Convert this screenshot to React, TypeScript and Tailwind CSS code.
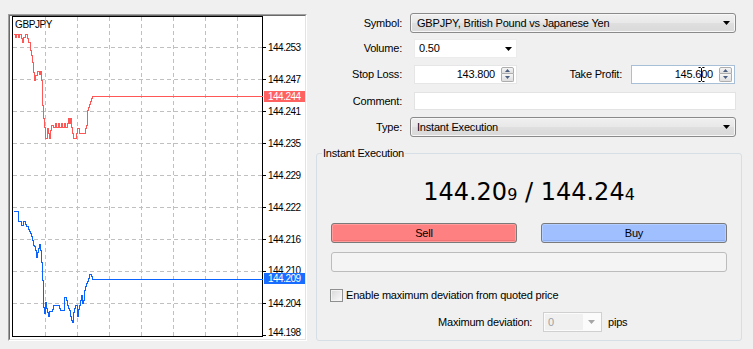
import React from "react";

const redPts: [number, number][] = [
  [13, 34], [15, 34], [15, 37], [16, 37], [16, 34], [18, 34], [18, 37], [19, 37], [19, 34], [21, 34], [21, 38], [22, 38], [22, 42], [23, 42], [23, 37], [25, 37], [25, 34], [27, 34], [27, 38], [28, 38], [28, 42], [30, 42], [30, 50], [31, 50], [31, 55], [32, 55], [32, 62], [33, 62], [33, 72], [34, 72], [34, 80], [35, 80], [35, 75], [37, 75], [37, 71], [39, 71], [39, 74], [40, 74], [40, 71], [41, 71], [41, 80], [42, 80], [42, 105], [43, 105], [43, 118], [44, 118], [44, 127], [45, 127], [45, 138], [47, 138], [47, 128], [48, 128], [48, 133], [49, 133], [49, 138], [50, 138], [50, 130], [51, 130], [51, 125], [53, 125], [53, 127], [55, 127], [55, 123], [56, 123], [56, 127], [58, 127], [58, 123], [59, 123], [59, 127], [61, 127], [61, 123], [62, 123], [62, 127], [64, 127], [64, 123], [65, 123], [65, 127], [67, 127], [67, 123], [68, 123], [68, 118], [69, 118], [69, 123], [70, 123], [70, 118], [71, 118], [71, 127], [72, 127], [72, 133], [73, 133], [73, 138], [76, 138], [76, 133], [77, 133], [77, 128], [79, 128], [79, 133], [85, 133], [85, 128], [86, 128], [86, 125], [87, 125], [87, 110], [88, 110], [88, 107], [89, 107], [89, 104], [90, 104], [90, 101], [91, 101], [91, 98], [92, 98], [92, 96], [262, 96],
];

const bluePts: [number, number][] = [
  [13, 211], [18, 211], [18, 221], [21, 221], [21, 225], [23, 225], [23, 221], [25, 221], [25, 224], [26, 224], [26, 226], [28, 226], [28, 229], [29, 229], [29, 231], [30, 231], [30, 233], [31, 233], [31, 236], [32, 236], [32, 240], [33, 240], [33, 245], [34, 245], [34, 246], [35, 246], [35, 250], [36, 250], [36, 257], [37, 257], [37, 252], [38, 252], [38, 248], [39, 248], [39, 244], [40, 244], [40, 250], [41, 250], [41, 262], [42, 262], [42, 280], [43, 280], [43, 307], [44, 307], [44, 313], [45, 313], [45, 302], [46, 302], [46, 308], [47, 308], [47, 312], [48, 312], [48, 316], [49, 316], [49, 311], [52, 311], [52, 309], [53, 309], [53, 305], [59, 305], [59, 308], [60, 308], [60, 310], [64, 310], [64, 297], [66, 297], [66, 300], [67, 300], [67, 305], [68, 305], [68, 308], [69, 308], [69, 310], [70, 310], [70, 316], [71, 316], [71, 320], [72, 320], [72, 322], [73, 322], [73, 312], [74, 312], [74, 308], [75, 308], [75, 305], [77, 305], [77, 316], [78, 316], [78, 309], [79, 309], [79, 305], [80, 305], [80, 300], [81, 300], [81, 295], [82, 295], [82, 303], [83, 303], [83, 300], [84, 300], [84, 290], [85, 290], [85, 286], [86, 286], [86, 283], [87, 283], [87, 281], [88, 281], [88, 278], [89, 278], [89, 274], [91, 274], [91, 276], [92, 276], [92, 279], [262, 279],
];

const toPoints = (p: [number, number][]) => p.map(([x, y]) => `${x + 0.5},${y + 0.5}`).join(" ");

const gridX = [45, 77, 109, 141, 173, 205, 237];
const gridY = [47, 79, 111, 143, 175, 207, 239, 271, 303];
const labels: [number, string][] = [
  [47, "144.253"], [79, "144.247"], [111, "144.241"], [143, "144.235"], [175, "144.229"], [207, "144.222"], [239, "144.216"], [270, "144.210"], [303, "144.204"], [332, "144.198"],
];

const fam = "'Liberation Sans', Arial, sans-serif";

function Chart() {
  return (
    <div className="ml-[8px] mt-[14px] w-[299px] h-[327px] border border-t-[#a0a0a0] border-l-[#a0a0a0] border-r-[#ffffff] border-b-[#ffffff]">
      <div className="w-full h-full border border-t-[#696969] border-l-[#696969] border-r-[#e3e3e3] border-b-[#e3e3e3] bg-white">
        <svg width="295" height="323" viewBox="10 16 295 323" shapeRendering="crispEdges" style={{ display: "block" }}>
          {gridX.map((x) => (
            <line key={"gx" + x} x1={x + 0.5} y1={17} x2={x + 0.5} y2={336} stroke="#c0c0c0" strokeDasharray="4 3" />
          ))}
          {gridY.map((y) => (
            <line key={"gy" + y} x1={13} y1={y + 0.5} x2={262} y2={y + 0.5} stroke="#c0c0c0" strokeDasharray="4 3" />
          ))}
          <rect x={12.5} y={16.5} width={250} height={320} fill="none" stroke="#000" />
          {gridY.map((y) => (
            <line key={"tk" + y} x1={263} y1={y + 0.5} x2={266} y2={y + 0.5} stroke="#000" />
          ))}
          <line x1={263} y1={335.5} x2={266} y2={335.5} stroke="#000" />
          <text x={15} y={27.5} fontSize={10} fill="#000" letterSpacing={-0.4} fontFamily={fam}>GBPJPY</text>
          <polyline points={toPoints(redPts)} fill="none" stroke="#ff5656" />
          <polyline points={toPoints(bluePts)} fill="none" stroke="#0a62ff" />
          {labels.map(([y, t]) => (
            <text key={t} x={268} y={y + 3.6} fontSize={10} fill="#000" letterSpacing={-0.5} fontFamily={fam}>{t}</text>
          ))}
          <rect x={264} y={91} width={41} height={11} fill="#ff6161" />
          <text x={268} y={100} fontSize={10} fill="#fff" letterSpacing={-0.5} fontFamily={fam}>144.244</text>
          <rect x={264} y={273} width={41} height={11} fill="#186cff" />
          <text x={268} y={282} fontSize={10} fill="#fff" letterSpacing={-0.5} fontFamily={fam}>144.209</text>
        </svg>
      </div>
    </div>
  );
}

function Arrow({ color = "#000" }: { color?: string }) {
  return (
    <svg width="7" height="4" viewBox="0 0 7 4" className="block">
      <path d="M0 0h7L3.5 4z" fill={color} />
    </svg>
  );
}

function Combo({ text, w }: { text: string; w: string }) {
  return (
    <div className={`${w} ml-[8px] h-[20px] rounded-[3px] border border-[#8a8a8a] bg-[linear-gradient(#f0f0f0,#e8e8e8_50%,#dfdfdf_50%,#d9d9d9)] flex items-center pl-[6px] pr-[5px] shadow-[inset_0_0_0_1px_#f7f7f7]`}>
      <span className="flex-1 whitespace-nowrap">{text}</span>
      <Arrow />
    </div>
  );
}

function Spinner() {
  const btn = "w-[13px] h-[7px] border border-[#adadad] bg-[linear-gradient(#f6f6f6,#dedede)] flex items-center justify-center";
  return (
    <div className="flex flex-col w-[13px]">
      <div className={`${btn} rounded-t-[2px]`}>
        <svg width="5" height="3" viewBox="0 0 5 3" className="block">
          <path d="M0 3L2.5 0L5 3z" fill="#4a5f80" />
        </svg>
      </div>
      <div className={`${btn} rounded-b-[2px] border-t-0 h-[8px]`}>
        <svg width="5" height="3" viewBox="0 0 5 3" className="block">
          <path d="M0 0h5L2.5 3z" fill="#4a5f80" />
        </svg>
      </div>
    </div>
  );
}

function Label({ children, w = "w-[86px]" }: { children: React.ReactNode; w?: string }) {
  return <div className={`${w} text-right whitespace-nowrap`}>{children}</div>;
}

export default function App() {
  return (
    <div className="w-[753px] h-[349px] bg-[#f0f0f0] flex overflow-hidden font-['Liberation_Sans',Arial,sans-serif] text-[11px] tracking-[-0.2px] text-black leading-[13px]">
      <Chart />
      <div className="ml-[9px] w-[426px] flex flex-col">
        <div className="mt-[13px] h-[20px] flex items-center">
          <Label>Symbol:</Label>
          <Combo text="GBPJPY, British Pound vs Japanese Yen" w="w-[326px]" />
        </div>
        <div className="mt-[6px] h-[19px] flex items-center">
          <Label>Volume:</Label>
          <div className="ml-[12px] w-[103px] h-[19px] bg-white border border-[#ececec] flex items-center pl-[4px] pr-[4px]">
            <span className="flex-1">0.50</span>
            <Arrow />
          </div>
        </div>
        <div className="mt-[7px] h-[19px] flex items-center">
          <Label>Stop Loss:</Label>
          <div className="ml-[12px] w-[103px] h-[19px] bg-white border border-[#e6e6e6] flex items-center justify-end pr-[2px]">
            <span className="mr-[6px]">143.800</span>
            <Spinner />
          </div>
          <Label w="w-[105px]">Take Profit:</Label>
          <div className="relative ml-[9px] w-[104px] h-[19px] bg-white border border-[#a7c0d8] flex items-center justify-end pr-[2px]">
            <span className="mr-[6px]">145.600</span>
            <Spinner />
            <svg width="7" height="15" viewBox="0 0 7 15" className="absolute left-[66px] top-[1px]">
              <path d="M0.5 0.5h2l1 1l1 -1h2M3.5 1.5v12M0.5 14.5h2l1 -1l1 1h2" fill="none" stroke="#000" strokeWidth="1" />
            </svg>
          </div>
        </div>
        <div className="mt-[8px] h-[18px] flex items-center">
          <Label>Comment:</Label>
          <div className="ml-[12px] w-[322px] h-[18px] bg-white border border-[#e3e3e3]" />
        </div>
        <div className="mt-[7px] h-[20px] flex items-center">
          <Label>Type:</Label>
          <Combo text="Instant Execution" w="w-[326px]" />
        </div>
        <div className="relative mt-[16px] h-[188px] w-[426px] border border-[#d5dfe5] rounded-[3px]">
          <div className="absolute left-[5px] top-[-8px] px-[1px] bg-[#f0f0f0] leading-[14px] whitespace-nowrap">Instant Execution</div>
          <div className="flex flex-col px-[14px]">
            <div className="pt-[24px] text-center font-['DejaVu_Sans',sans-serif] text-[24px] leading-[28px] tracking-normal">
              144.20<span className="text-[16px]">9</span> / 144.24<span className="text-[16px]">4</span>
            </div>
            <div className="mt-[14px] flex justify-between">
              <div className="w-[186px] h-[20px] rounded-[3px] border border-[#7a7a7a] bg-[#ff8080] shadow-[inset_0_0_0_1px_#ff9c9c,inset_0_-2px_0_0_#f07272] flex items-center justify-center">Sell</div>
              <div className="w-[186px] h-[20px] rounded-[3px] border border-[#7a7a7a] bg-[#a0bfff] shadow-[inset_0_0_0_1px_#b4ceff,inset_0_-2px_0_0_#8eaef0] flex items-center justify-center">Buy</div>
            </div>
            <div className="mt-[9px] h-[20px] rounded-[3px] border border-[#bcbcbc] bg-[#f4f4f4]" />
            <div className="mt-[17px] h-[13px] flex items-center ml-[-1px]">
              <div className="w-[13px] h-[13px] border border-[#8e8f8f] bg-[linear-gradient(135deg,#d8d8d8,#fbfbfb)] shadow-[inset_0_0_0_1px_#f3f3f3]" />
              <span className="ml-[3px] whitespace-nowrap">Enable maximum deviation from quoted price</span>
            </div>
            <div className="mt-[10px] h-[20px] flex items-center pl-[107px]">
              <div className="w-[94px] text-right whitespace-nowrap">Maximum deviation:</div>
              <div className="ml-[11px] w-[59px] h-[20px] border border-[#d0d0d0] bg-[#fbfbfb] flex p-[1px]">
                <div className="w-[38px] bg-[#f0f0f0] text-[#a0a0a0] pl-[3px] flex items-center">0</div>
                <div className="flex-1 flex items-center justify-center">
                  <Arrow color="#a6a6a6" />
                </div>
              </div>
              <span className="ml-[6px]">pips</span>
            </div>
          </div>
        </div>
      </div>
    </div>
  );
}
